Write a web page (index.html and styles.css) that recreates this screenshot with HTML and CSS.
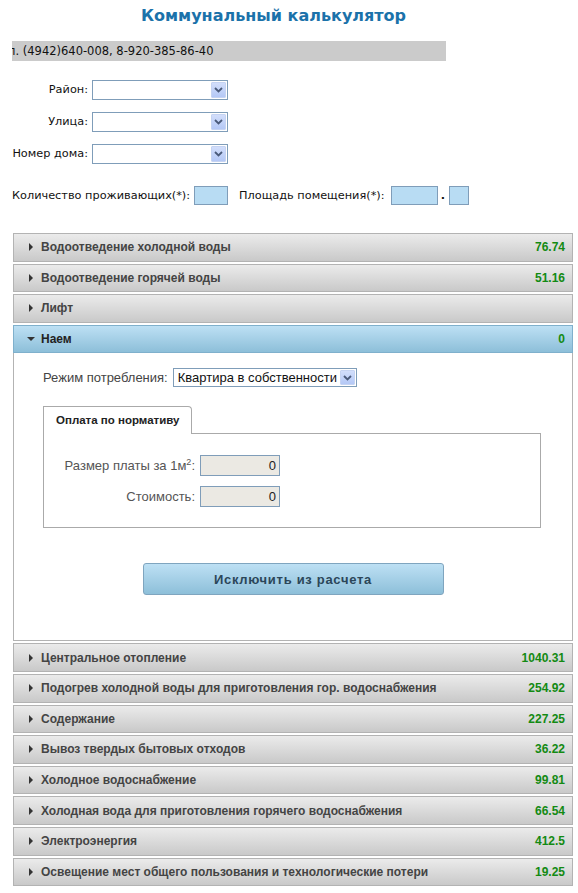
FILE: index.html
```html
<!DOCTYPE html>
<html lang="ru">
<head>
<meta charset="utf-8">
<title>Коммунальный калькулятор</title>
<link rel="stylesheet" href="styles.css">
</head>
<body>
<div class="page">
  <h1 class="title">Коммунальный калькулятор</h1>
  <div class="ticker"><span class="ticker-text">Тел. (4942)640-008, 8-920-385-86-40</span></div>

  <div class="address">
    <span class="addr-label">Район:</span>
    <div class="select select-addr"><span class="select-value"></span><span class="select-btn"><svg width="9" height="6" viewBox="0 0 9 6"><path d="M1 1 L4.5 4.5 L8 1" fill="none" stroke="#4a5a7a" stroke-width="1.8"/></svg></span></div>
    <span class="addr-label">Улица:</span>
    <div class="select select-addr"><span class="select-value"></span><span class="select-btn"><svg width="9" height="6" viewBox="0 0 9 6"><path d="M1 1 L4.5 4.5 L8 1" fill="none" stroke="#4a5a7a" stroke-width="1.8"/></svg></span></div>
    <span class="addr-label">Номер дома:</span>
    <div class="select select-addr"><span class="select-value"></span><span class="select-btn"><svg width="9" height="6" viewBox="0 0 9 6"><path d="M1 1 L4.5 4.5 L8 1" fill="none" stroke="#4a5a7a" stroke-width="1.8"/></svg></span></div>
  </div>

  <div class="params">
    <span class="param-label">Количество проживающих(*):</span>
    <input class="inp inp-count" type="text">
    <span class="param-label area-label">Площадь помещения(*):</span>
    <input class="inp inp-area" type="text">
    <span class="dot">.</span>
    <input class="inp inp-frac" type="text">
  </div>

  <div class="accordion">
    <div class="acc-header"><span class="acc-icon"></span><span class="acc-title">Водоотведение холодной воды</span><span class="acc-value">76.74</span></div>
    <div class="acc-header"><span class="acc-icon"></span><span class="acc-title">Водоотведение горячей воды</span><span class="acc-value">51.16</span></div>
    <div class="acc-header"><span class="acc-icon"></span><span class="acc-title">Лифт</span><span class="acc-value"></span></div>
    <div class="acc-header acc-active"><span class="acc-icon acc-icon-open"></span><span class="acc-title">Наем</span><span class="acc-value">0</span></div>
    <div class="acc-content">
      <div class="mode-row">
        <span class="mode-label">Режим потребления:</span>
        <div class="select select-mode"><span class="select-value">Квартира в собственности</span><span class="select-btn"><svg width="9" height="6" viewBox="0 0 9 6"><path d="M1 1 L4.5 4.5 L8 1" fill="none" stroke="#4a5a7a" stroke-width="1.8"/></svg></span></div>
      </div>
      <div class="tabs">
        <div class="tabs-nav"><div class="tab">Оплата по нормативу</div></div>
        <div class="tab-panel">
          <span class="field-label">Размер платы за 1м<sup>2</sup>:</span>
          <input class="inp-ro" type="text" value="0" readonly>
          <span class="field-label">Стоимость:</span>
          <input class="inp-ro" type="text" value="0" readonly>
        </div>
      </div>
      <div class="btn-row"><button class="btn-exclude" type="button">Исключить из расчета</button></div>
    </div>
    <div class="acc-header"><span class="acc-icon"></span><span class="acc-title">Центральное отопление</span><span class="acc-value">1040.31</span></div>
    <div class="acc-header"><span class="acc-icon"></span><span class="acc-title">Подогрев холодной воды для приготовления гор. водоснабжения</span><span class="acc-value">254.92</span></div>
    <div class="acc-header"><span class="acc-icon"></span><span class="acc-title">Содержание</span><span class="acc-value">227.25</span></div>
    <div class="acc-header"><span class="acc-icon"></span><span class="acc-title">Вывоз твердых бытовых отходов</span><span class="acc-value">36.22</span></div>
    <div class="acc-header"><span class="acc-icon"></span><span class="acc-title">Холодное водоснабжение</span><span class="acc-value">99.81</span></div>
    <div class="acc-header"><span class="acc-icon"></span><span class="acc-title">Холодная вода для приготовления горячего водоснабжения</span><span class="acc-value">66.54</span></div>
    <div class="acc-header"><span class="acc-icon"></span><span class="acc-title">Электроэнергия</span><span class="acc-value">412.5</span></div>
    <div class="acc-header"><span class="acc-icon"></span><span class="acc-title">Освещение мест общего пользования и технологические потери</span><span class="acc-value">19.25</span></div>
  </div>
</div>
</body>
</html>
```

FILE: styles.css
```css
html, body {
  margin: 0;
  padding: 0;
  background: #ffffff;
}
body {
  font-family: "DejaVu Sans", Verdana, sans-serif;
  font-size: 11.3px;
  color: #111;
}
.page {
  padding: 6px 5px 0 12px;
}
.title {
  margin: 0;
  padding-right: 38px;
  text-align: center;
  font-family: "DejaVu Sans", Verdana, sans-serif;
  font-size: 16px;
  line-height: 20px;
  font-weight: bold;
  color: #1b72aa;
}
.ticker {
  margin-top: 15px;
  width: 434px;
  height: 20px;
  line-height: 20px;
  background: #cbcbcb;
  overflow: hidden;
  white-space: nowrap;
  font-size: 11.5px;
}
.ticker-text {
  display: inline-block;
  margin-left: -18px;
  color: #111;
}
.address {
  margin-top: 19px;
  display: grid;
  grid-template-columns: 76px 136px;
  column-gap: 4px;
  row-gap: 12px;
  align-items: center;
}
.addr-label {
  text-align: right;
  line-height: 20px;
  white-space: nowrap;
}
.select {
  box-sizing: border-box;
  height: 20px;
  border: 1px solid #7f9db9;
  background: #fff;
  display: flex;
  align-items: center;
  justify-content: space-between;
  padding: 1px;
}
.select-value {
  padding-left: 3px;
  white-space: nowrap;
}
.select-btn {
  box-sizing: border-box;
  width: 15px;
  height: 16px;
  display: flex;
  align-items: center;
  justify-content: center;
  background: linear-gradient(#d2defb, #b4c8f6);
  border: 1px solid #c5d3f2;
  border-radius: 1px;
}
.params {
  margin-top: 22px;
  display: flex;
  align-items: center;
  height: 19px;
  white-space: nowrap;
}
.inp {
  box-sizing: border-box;
  height: 19px;
  border: 1px solid #7f9db9;
  background: #b8dcf3;
  padding: 0;
  margin: 0;
}
.inp-count {
  width: 34px;
  margin-left: 4px;
}
.area-label {
  margin-left: 11px;
}
.inp-area {
  width: 47px;
  margin-left: 6px;
}
.dot {
  width: 11px;
  text-align: center;
  font-weight: bold;
}
.inp-frac {
  width: 20px;
}
.accordion {
  margin-top: 28px;
  margin-left: 1px;
  width: 560px;
  font-family: "Liberation Sans", Arial, sans-serif;
}
.acc-header {
  box-sizing: border-box;
  height: 28.6px;
  margin-top: 2px;
  border: 1px solid #b3b3b3;
  background: linear-gradient(#ebebeb, #c9c9c9);
  display: flex;
  align-items: center;
  padding: 0 7px 0 15px;
  font-size: 12px;
  font-weight: bold;
  color: #444;
}
.accordion > .acc-header:first-child {
  margin-top: 0;
}
.acc-icon {
  width: 0;
  height: 0;
  border-left: 4px solid #333;
  border-top: 4px solid transparent;
  border-bottom: 4px solid transparent;
  margin-right: 8px;
}
.acc-icon-open {
  border-left: 4px solid transparent;
  border-right: 4px solid transparent;
  border-top: 4px solid #333;
  border-bottom: 0;
  margin-left: -2px;
  margin-right: 6px;
}
.acc-title {
  flex: 1;
  white-space: nowrap;
}
.acc-value {
  color: #138a13;
}
.acc-active {
  background: linear-gradient(#bde0f4, #8dbfd9);
  border-color: #7fb0cc;
  color: #222;
}
.acc-content {
  border: 1px solid #b3b3b3;
  border-top: 0;
  padding: 15px 29px 45px 29px;
  font-size: 13px;
  color: #444;
}
.mode-row {
  display: flex;
  align-items: center;
  height: 19px;
}
.mode-label {
  margin-right: 5px;
}
.select-mode {
  width: 184px;
  height: 19px;
  color: #111;
}
.select-mode .select-btn {
  height: 15px;
}
.tabs {
  margin-top: 19px;
  width: 498px;
}
.tabs-nav {
  display: flex;
}
.tab {
  box-sizing: border-box;
  width: 149px;
  height: 28px;
  margin-bottom: -1px;
  border: 1px solid #aaa;
  border-bottom: 0;
  border-radius: 0 4px 0 0;
  background: #fff;
  position: relative;
  z-index: 1;
  font-size: 11.5px;
  font-weight: bold;
  color: #222;
  line-height: 27px;
  padding-left: 12px;
  white-space: nowrap;
}
.tab-panel {
  box-sizing: border-box;
  height: 95px;
  border: 1px solid #aaa;
  padding-top: 21px;
  display: grid;
  grid-template-columns: 151px 80px;
  column-gap: 5px;
  row-gap: 10px;
  align-content: start;
  align-items: center;
}
.field-label {
  text-align: right;
  color: #555;
  white-space: nowrap;
}
.field-label sup {
  font-size: 9px;
  line-height: 0;
}
.inp-ro {
  box-sizing: border-box;
  width: 80px;
  height: 21px;
  margin: 0;
  border: 1px solid #7f9db9;
  background: #ebe9e3;
  text-align: right;
  padding: 0 3px;
  font-family: "Liberation Sans", Arial, sans-serif;
  font-size: 13px;
  color: #222;
}
.btn-row {
  margin-top: 35px;
  display: flex;
  justify-content: center;
}
.btn-exclude {
  box-sizing: border-box;
  width: 301px;
  height: 32px;
  border: 1px solid #7fa5bf;
  border-radius: 3px;
  background: linear-gradient(#bde0f4, #8dbfd9);
  font-family: "Liberation Sans", Arial, sans-serif;
  font-size: 13px;
  font-weight: bold;
  color: #2b4659;
  letter-spacing: 0.7px;
}
```
